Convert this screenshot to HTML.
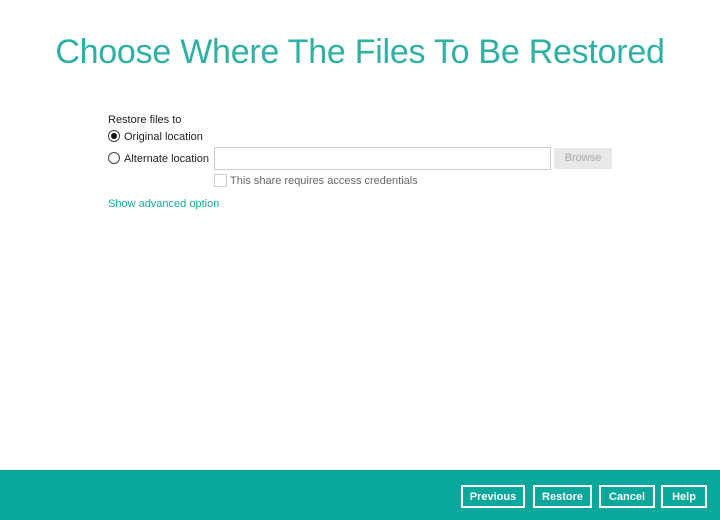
<!DOCTYPE html>
<html><head><style>
body{margin:0;width:720px;height:520px;background:#fff;font-family:"Liberation Sans",sans-serif;position:relative;overflow:hidden;color:#222}
.t{position:absolute;top:33px;left:0;width:720px;text-align:center;font-size:34px;color:#2fb0a4;letter-spacing:-0.25px}
.a{position:absolute;font-size:11px}
.r{position:absolute;width:10px;height:10px;border:1px solid #444;border-radius:50%}
.in{position:absolute;left:214px;top:147px;width:335px;height:21px;border:1px solid #ccc}
.br{position:absolute;left:554px;top:148px;width:58px;height:21px;background:#e8e8e8;color:#aaa;font-size:11px;text-align:center;line-height:21px}
.cb{position:absolute;left:214px;top:174px;width:11px;height:11px;border:1px solid #ccc}
.f{position:absolute;left:0;top:470px;width:720px;height:50px;background:#0aa89a}
.b{position:absolute;top:485px;height:19px;border:2px solid #fff;color:#fff;font-size:11px;font-weight:bold;text-align:center;line-height:21px;box-sizing:content-box}
</style></head><body>
<div class="t">Choose Where The Files To Be Restored</div>
<div class="a" style="left:108px;top:114px">Restore files to</div>
<div class="r" style="left:108px;top:130px"><div style="position:absolute;left:2px;top:2px;width:6px;height:6px;border-radius:50%;background:#111"></div></div>
<div class="a" style="left:124px;top:131px">Original location</div>
<div class="r" style="left:108px;top:152px"></div>
<div class="a" style="left:124px;top:153px">Alternate location</div>
<div class="in"></div>
<div class="br">Browse</div>
<div class="cb"></div>
<div class="a" style="left:230px;top:175px;color:#666">This share requires access credentials</div>
<div class="a" style="left:108px;top:198px;color:#1aa89a">Show advanced option</div>
<div class="f"></div>
<div class="b" style="left:461px;width:60px">Previous</div>
<div class="b" style="left:533px;width:55px">Restore</div>
<div class="b" style="left:599px;width:52px">Cancel</div>
<div class="b" style="left:661px;width:42px">Help</div>
</body></html>
